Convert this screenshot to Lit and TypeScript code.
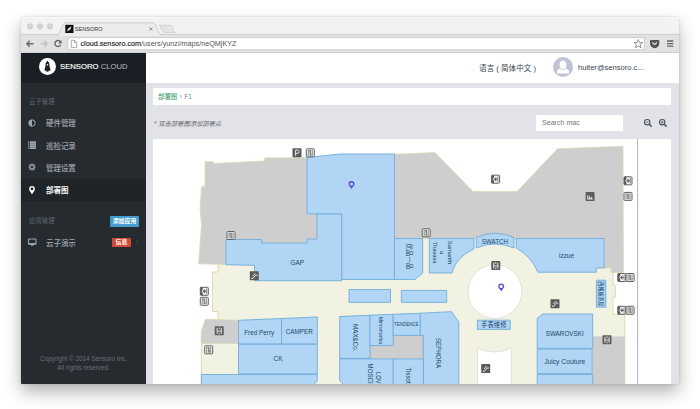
import { LitElement, html, svg, css } from "lit";
import { customElement } from "lit/decorators.js";

type Kind = "parking" | "lift" | "exit" | "stairs" | "toilet" | "atm";

const SHOPS: string[] = [
  "307,157.5 340,154 394.5,154 394.5,279.5 341.7,279.5 341.7,214 307,214",
  "317,214 341.7,214 341.7,280.7 254.5,280.7 254.5,265.3 226,264.7 226,239.5 261.5,239.5 261.5,243 307,243 307,239 317,239",
  "394.5,238.5 422.7,238.5 422.7,273 415,279.5 394.5,279.5",
  "349,289.5 390.5,289.5 390.5,302.4 349,302.4",
  "401.4,290.4 446.6,290.4 446.6,302.4 401.4,302.4",
  "238.5,320.3 281.5,318.5 281.5,344 238.5,344",
  "281.5,318.5 317.3,317 317.3,344 281.5,344",
  "238.5,344.3 317.3,344.3 317.3,373.8 238.5,373.8",
  "201.3,374.5 317.3,374.5 317.3,381 313,385 201.3,385",
  "339.7,316.6 370,315.2 370,358.4 339.7,358.4",
  "370,315.2 393.2,314.3 393.2,345.5 370,345.5",
  "393.2,314.3 420.3,313.2 420.3,335.4 393.2,335.4",
  "420.3,313.2 451.5,311.7 458.8,322 458.8,386 423.4,386 423.4,335.4 420.3,335.4",
  "339.7,358.9 393.2,358.9 393.2,386 345,386 339.7,380.5",
  "393.2,358.9 423.4,358.9 423.4,386 393.2,386",
  "477.4,320.2 510.2,320.2 510.2,329.4 477.4,329.4",
  "537.2,318.5 542.5,314 592.7,314 592.7,348.3 537.2,348.3",
  "537.2,349 592.2,349 592.2,373.7 537.2,373.7",
  "537.2,374.5 592.7,374.5 592.7,386 537.2,386",
  "596.4,280.2 605.8,280.2 605.8,307.2 596.4,307.2",
];

const CURVED: string[] = [
  "M429.3 238.5H474V249Q456 257 451.8 273H429.3Z",
  "M476.3 237.5Q495 229 514 237.5V248Q495 240 476.3 248Z",
  "M516.2 238.5H604V268H596.3V272.2H537.8Q532 257 516.2 248Z",
];

const LABELS: { t: string; x: number; y: number; s: number; w?: number; r?: boolean }[] = [
  { t: "GAP", x: 297.3, y: 264.6, s: 6.8, w: 13.6 },
  { t: "Fred Perry", x: 259.2, y: 334.9, s: 6.6, w: 30 },
  { t: "CAMPER", x: 299.3, y: 333.6, s: 6.6, w: 27 },
  { t: "CK", x: 278, y: 361.4, s: 6.6, w: 9 },
  { t: "SWATCH", x: 494.9, y: 243.5, s: 6.8, w: 26.5 },
  { t: "izzue", x: 566.5, y: 257.8, s: 6.8, w: 15 },
  { t: "SWAROVSKI", x: 564.7, y: 335.9, s: 6.6, w: 38 },
  { t: "Juicy Couture", x: 564.7, y: 363.8, s: 6.6, w: 41 },
  { t: "TENDENCE", x: 406.3, y: 326, s: 5, w: 24.5 },
  { t: "手表维修", x: 493.8, y: 327, s: 6.4, w: 25.5 },
  { t: "MAX&Co.", x: 354.8, y: 337.8, s: 6.4, w: 27.5, r: true },
  { t: "Minnetonka", x: 381.6, y: 330.5, s: 5.2, w: 27.5, r: true },
  { t: "SEPHORA", x: 438.2, y: 353, s: 6.6, w: 30, r: true },
  { t: "Tissot", x: 408.3, y: 375.5, s: 6.4, w: 16.6, r: true },
  { t: "MOSCI", x: 369.7, y: 373.6, s: 6.4, w: 20, r: true },
  { t: "LOV", x: 378, y: 377.9, s: 6.4, w: 11.6, r: true },
  { t: "优品一品", x: 408.8, y: 256.5, s: 6.6, w: 26, r: true },
  { t: "Samanth", x: 450.3, y: 252.5, s: 5.6, w: 23.5, r: true },
  { t: "a", x: 442, y: 252.5, s: 5.6, r: true },
  { t: "Thavasa", x: 435, y: 252.5, s: 5.6, w: 22, r: true },
  { t: "西城旅游局", x: 601.2, y: 293.7, s: 5.2, w: 25, r: true },
];

const SIGNS: [Kind, number, number][] = [
  ["parking", 297, 152.8], ["lift", 310.3, 152.8], ["lift", 231, 235.5],
  ["stairs", 254.3, 275.8], ["exit", 204.3, 291.3], ["lift", 204.3, 301.3],
  ["toilet", 219.2, 330.8], ["lift", 208.7, 349.8], ["lift", 426.2, 232.8],
  ["exit", 495.6, 179.2], ["atm", 590.1, 196.5], ["exit", 628, 180.8],
  ["lift", 628, 196.4], ["toilet", 495.8, 265.6], ["stairs", 555, 303.7],
  ["exit", 621.8, 277.5], ["lift", 630.1, 277.5], ["exit", 621.8, 310.3],
  ["lift", 630.1, 310.3], ["toilet", 607, 339.7], ["stairs", 485.7, 368.6],
];

const glyph = (k: Kind) => {
  switch (k) {
    case "parking":
      return svg`<rect class="solid" x="-4.5" y="-4.5" width="9" height="9" rx=".8"/><path class="cut" d="M-1.4 3V-2.8H.4A1.6 1.6 0 0 1 .4.6H-1.4"/>`;
    case "lift":
      return svg`<rect class="open" x="-4" y="-4" width="8" height="8" rx=".8"/><path class="thin" d="M-2-3V3M2-3V3M-1.2-2.4H.4L-.4 2.4H1.4M-.6-2.4 .8 2.2"/>`;
    case "exit":
      return svg`<rect class="open" x="-4" y="-4" width="8" height="8" rx=".8"/><path class="solid" d="M-4-4H-1.6V-1.6L-2.8 0-1.6 1.6V4H-4Z"/><path class="solid" d="M-1.8 0 .6-2.2V2.2Z"/><path class="solid" d="M.4-.6H2V.6H.4Z"/><path class="thin" d="M2.3-2.8V2.8"/>`;
    case "stairs":
      return svg`<rect class="solid" x="-4.5" y="-4.5" width="9" height="9" rx=".6"/><path class="cut" d="M-3 2.6H-1.2L1.4-.6H3.2M-1.6.4 1-2.6"/>`;
    case "toilet":
      return svg`<rect class="solid" x="-4.5" y="-4.5" width="9" height="9" rx=".8"/><path class="cut" d="M-2.1-2.9V3M2.1-2.9V3M-2 .3H2M0-3.4V-1.6M0 2V3.6"/>`;
    case "atm":
      return svg`<rect class="solid" x="-4.5" y="-4.5" width="9" height="9" rx=".8"/><path class="cut" d="M-2.3 2.8V-1.4M-.4 2.8V-.6M1.4 2.8V.6M-2.6 2.4H2.8"/>`;
  }
};

const pin = (x: number, y: number) =>
  svg`<path class="pin" transform="translate(${x} ${y})" d="M0 4C-1.1 1.8-3 .7-3-.9A3 3 0 0 1 3-.9C3 .7 1.1 1.8 0 4ZM0-2.5A1.6 1.6 0 1 0 0 .7 1.6 1.6 0 1 0 0-2.5Z"/>`;

@customElement("floor-map")
export class FloorMap extends LitElement {
  static styles = css`
    :host { display: block; background: #fff; overflow: hidden; }
    svg { display: block; width: 518px; height: 245px; }
    .floor { fill: #f1f2e1; stroke: #dfd5a6; stroke-width: 0.9; }
    .void { fill: #cecece; stroke: #e0d8b4; stroke-width: 0.8; }
    .grey { fill: #cecece; stroke: #c6c8c2; stroke-width: 0.4; }
    .shop { fill: #b1d6f5; stroke: #6fabdc; stroke-width: 0.9; }
    .hole { fill: #fff; stroke: #dcdcd2; stroke-width: 0.8; }
    .edge { stroke: #a9a9a9; stroke-width: 0.9; }
    .label { fill: #23476b; text-anchor: middle; font-family: "Liberation Sans", "Noto Sans CJK SC", sans-serif; }
    .solid { fill: #5b5b5b; }
    .open { fill: #f4f4f4; stroke: #626262; stroke-width: 1; }
    .thin { fill: none; stroke: #6a6a6a; stroke-width: 0.8; }
    .cut { fill: none; stroke: #e8e8e8; stroke-width: 1; }
    .pin { fill: #5f49d0; fill-rule: evenodd; }
  `;

  render() {
    return html`<svg viewBox="153 139 518 245">
      <path class="edge" d="M637.6 139V384" />
      <path class="floor" d="M218 262V272H212.5V311.5H218V319.5L205 332H201.4V390H624.8V314.5H613V297.3H615.3V285H613V272.5L600 238H394V264Z" />
      <path class="void" d="M205 161.8H213.5V163.5L264.7 161V158L307 157.6V214H317V239H307V243H261.5V239.5H226V264.5L198.6 263.8 201.5 225 200 209 201.5 186.7H205Z" />
      <path class="void" d="M394.5 154.2 435 152.6 473 191.5H517L557.5 148.8 623 146.3 623.4 272.5H611V268H604V238.5H394.5Z" />
      <path class="void" d="M205.3 319.2 238.5 320.3V343.5H201.4V331Z" />
      <path class="grey" d="M370 345.5H393V335.4H423.4V358.6H370ZM593 336.7H624.5V386H593Z" />
      <path fill="#f1f2e1" d="M423.2 238.9H428.8V262H423.2Z" />
      ${SHOPS.map((p) => svg`<polygon class="shop" points=${p} />`)}
      ${CURVED.map((d) => svg`<path class="shop" d=${d} />`)}
      <circle class="hole" cx="495" cy="291.5" r="26.9" />
      <path class="hole" d="M477.6 390V348Q494.5 356 511.4 348V390Z" />
      ${LABELS.map((l) => {
        const spin = l.r ? `rotate(90 ${l.x} ${l.y})` : "";
        return l.w
          ? svg`<text class="label" x=${l.x} y=${l.r ? l.y + 2.2 : l.y} font-size=${l.s} textLength=${l.w} lengthAdjust="spacingAndGlyphs" transform=${spin}>${l.t}</text>`
          : svg`<text class="label" x=${l.x} y=${l.y + 2.2} font-size=${l.s} transform=${spin}>${l.t}</text>`;
      })}
      ${SIGNS.map(([k, x, y]) => svg`<g transform="translate(${x} ${y})">${glyph(k)}</g>`)}
      ${pin(351.5, 185)} ${pin(501.2, 287.3)}
    </svg>`;
  }
}

const MENU = [
  { label: "硬件管理", icon: svg`<circle cx="5" cy="5" r="3.2" fill="none" stroke="currentColor" stroke-width="1"/><path fill="currentColor" d="M5 1.8A3.2 3.2 0 0 0 5 8.2Z"/>` },
  { label: "巡检记录", icon: svg`<path fill="currentColor" d="M1.3 1.3H2.3V9H1.3ZM3 1.3H9V9H3Z"/><path stroke="#262a2f" stroke-width=".3" d="M1 3.2H9M1 5.2H9M1 7.2H9"/>` },
  { label: "管理设置", icon: svg`<circle cx="5" cy="5" r="2.1" fill="none" stroke="currentColor" stroke-width="1.3"/><path stroke="currentColor" stroke-width="1.1" d="M5 1.3V2.8M5 7.2V8.7M1.4 5H2.8M7.2 5H8.6M2.4 2.4 3.4 3.4M6.6 6.6 7.6 7.6M2.4 7.6 3.4 6.6M6.6 3.4 7.6 2.4"/>` },
  { label: "部署图", active: true, icon: svg`<path fill="currentColor" fill-rule="evenodd" d="M5 9.4C4 7.2 2.1 5.8 2.1 3.9A2.9 2.9 0 0 1 7.9 3.9C7.9 5.8 6 7.2 5 9.4ZM5 2.4A1.4 1.4 0 1 0 5 5.2 1.4 1.4 0 1 0 5 2.4Z"/>` },
];

@customElement("app-root")
export class AppRoot extends LitElement {
  static styles = css`
    :host { display: block; height: 409px; overflow: hidden; background: #fff; font-family: "Liberation Sans", "Noto Sans CJK SC", sans-serif; }
    * { box-sizing: border-box; }
    svg { display: block; flex: none; }
    .stage { height: 409px; padding: 17px 21px 25px; }
    .window { height: 367px; display: flex; flex-direction: column; border-radius: 3px 3px 1px 1px; overflow: hidden; box-shadow: 0 8px 17px rgba(0, 0, 0, 0.3), 0 0 2px rgba(0, 0, 0, 0.22); }
    .chrome { flex: none; height: 36px; }
    .chrome svg { width: 658px; height: 36px; }
    .tab { font-size: 5.9px; fill: #333; }
    .url { font-size: 7.4px; fill: #555; }
    .host { fill: #222; stroke: #222; stroke-width: 0.15; }
    .body { flex: 1; display: flex; min-height: 0; }
    .side { width: 125px; flex: none; background: #262b2f; display: flex; flex-direction: column; }
    .brand { height: 30px; flex: none; background: #1a1e25; display: flex; align-items: center; padding: 0 0 3px 18px; gap: 4px; color: #e9ebee; white-space: nowrap; }
    .name { display: block; width: 70px; height: 17px; }
    .heading { display: flex; align-items: center; justify-content: space-between; padding: 0 7px 0 8px; color: #5f6673; font-size: 6.4px; flex: none; }
    .first { height: 29px; padding-top: 7px; }
    .second { height: 30px; padding-top: 7px; }
    .item { height: 22.4px; flex: none; display: flex; align-items: center; padding: 0 7px 0 6px; color: #a0a5b2; font-size: 7.5px; font-weight: 500; border-bottom: 1px solid #23272b; letter-spacing: -0.05px; }
    .item .text { margin-left: 9px; }
    .active { background: #1f2428; color: #f4f5f6; font-weight: 700; }
    .badge { border-radius: 1px; color: #fff; font-size: 5.9px; font-weight: 700; line-height: 11px; text-align: center; }
    .add { width: 29px; background: #439dd1; margin-top: 3px; }
    .item .info { width: 19px; line-height: 9px; font-size: 5.9px; background: #d24a36; margin-left: auto; letter-spacing: 0; }
    .copy { margin-top: auto; text-align: center; color: #687080; font-size: 6.35px; line-height: 9px; padding-bottom: 12.5px; }
    .main { flex: 1; min-width: 0; background: #e2e3e9; display: flex; flex-direction: column; }
    .top { height: 30px; flex: none; background: #fff; display: flex; align-items: center; justify-content: flex-end; padding: 0 35px 2px 0; color: #3d4654; }
    .lang { font-size: 7.6px; margin-right: 17px; white-space: pre; }
    .mail { font-size: 7.55px; margin-left: 5px; width: 66px; white-space: nowrap; }
    .crumb { margin: 5px 8px 0 7px; height: 17px; flex: none; background: #fff; display: flex; align-items: center; padding: 0 0 1px 5px; font-size: 6.4px; color: #7d8494; gap: 2.5px; }
    .green { color: #4da67c; font-weight: 500; }
    .tools { height: 34px; flex: none; display: flex; align-items: center; padding: 2px 11px 0 8px; font-size: 6.3px; color: #666; }
    .tip { font-style: italic; }
    .search { margin-left: auto; width: 87px; height: 16px; background: #fff; padding-left: 6px; line-height: 17px; font-size: 7.1px; color: #777; }
    .zoom { display: flex; gap: 5px; margin-left: 20px; }
    floor-map { flex: 1; margin: 0 8px 0 7px; min-height: 0; }
  `;

  private chrome() {
    return html`<svg viewBox="21 17 658 36">
      <path fill="#f2f2f2" d="M21 17H679V35H21Z" />
      <path fill="#fafafa" d="M21 17H679V18H21Z" />
      <path fill="#e2e2e2" d="M21 34.5H679V53H21Z" />
      <path stroke="#c6c6c6" stroke-width=".8" d="M21 34.4H679M21 52.6H679" />
      <g fill="#d2d2d2" stroke="#c6c6c6" stroke-width=".4"><circle cx="30" cy="26.4" r="2.8" /><circle cx="40" cy="26.4" r="2.8" /><circle cx="50" cy="26.4" r="2.8" /></g>
      <path fill="#ececec" stroke="#c6c6c6" stroke-width=".8" d="M57.5 35C61 34 61.5 23 65.5 22.8H152.5C157 23 157.5 34 161 35" />
      <path fill="#ececec" d="M59 34H160V36H59Z" />
      <path fill="#e4e4e4" stroke="#c9c9c9" stroke-width=".7" d="M159.5 25.3H171C173 25.5 173 31 175 32.5H164.5C161.5 32 161 27 159.5 25.3Z" />
      <rect x="65.3" y="24.8" width="8.2" height="8.2" fill="#111" />
      <path fill="#ddd" d="M67 31.5 68 28.5 71.5 26.2 70.5 29.5Z" />
      <text class="tab" x="74.8" y="31.2" textLength="27.7" lengthAdjust="spacingAndGlyphs">SENSORO</text>
      <path stroke="#777" stroke-width=".8" d="M149.3 27.3 152.3 30.5M152.3 27.3 149.3 30.5" />
      <g fill="none" stroke-width="1.4">
        <path stroke="#666" d="M33.5 43.7H27M29.8 40.7 26.8 43.7 29.8 46.7" />
        <path stroke="#c2c2c2" d="M40.5 43.7H47M44.2 40.7 47.2 43.7 44.2 46.7" />
        <path stroke="#666" d="M60.4 41.8A3 3 0 1 0 60.7 44.8" />
      </g>
      <path fill="#666" d="M61.6 40V43.4H58.2Z" />
      <path fill="#fff" stroke="#bdbdbd" stroke-width=".7" d="M67.8 37.6H644.3V49.8H67.8Z" />
      <path fill="#fff" stroke="#8c8c8c" stroke-width=".7" d="M71.3 40.3H74.6L76.7 42.4V47.6H71.3ZM74.5 40.3V42.5H76.7" />
      <text class="url" x="80.5" y="46.4" textLength="156" lengthAdjust="spacingAndGlyphs"><tspan class="host">cloud.sensoro.com</tspan>/users/yunzi/maps/neQMjKYZ</text>
      <path fill="#fff" stroke="#777" stroke-width=".8" d="M638.3 39.6 639.5 42.6 642.6 42.7 640.2 44.7 641 47.8 638.3 46.1 635.6 47.8 636.4 44.7 634 42.7 637.1 42.6Z" />
      <path fill="#555" d="M650.8 40H658.5Q659.3 40 659.3 40.8V43.5A4.6 4.6 0 0 1 650 43.5V40.8Q650 40 650.8 40Z" />
      <path fill="none" stroke="#eee" stroke-width="1.1" d="M652.4 42.5 654.65 44.6 656.9 42.5" />
      <path stroke="#666" stroke-width="1.3" d="M667 41H673.3M667 43.6H673.3M667 46.2H673.3" />
    </svg>`;
  }

  private lens(plus: boolean) {
    return html`<svg width="10" height="10" viewBox="0 0 10 10" fill="none" stroke="#4a525e">
      <circle cx="4.2" cy="4.2" r="2.7" stroke-width="1.1" />
      <path stroke-width="1.5" d="M6.2 6.2 8.6 8.6" />
      <path stroke-width=".8" d=${plus ? "M2.9 4.2H5.5M4.2 2.9V5.5" : "M2.9 4.2H5.5"} />
    </svg>`;
  }

  render() {
    return html`<div class="stage"><div class="window">
      <div class="chrome">${this.chrome()}</div>
      <div class="body">
        <nav class="side">
          <div class="brand">
            <svg width="17" height="17" viewBox="0 0 17 17"><circle cx="8.5" cy="8.5" r="8.5" fill="#fff" /><path fill="#1a1e25" d="M8.5 2.8C10.2 4.3 10.7 6 10.6 9L11.3 10.6V13.2L10 12.4H9.5V13.8H7.5V12.4H7L5.7 13.2V10.6L6.4 9C6.3 6 6.8 4.3 8.5 2.8Z" /><circle cx="8.5" cy="6.8" r=".8" fill="#fff" /></svg>
            <svg class="name" viewBox="0 0 70 17"><text x="0" y="11.3" font-size="7.3" fill="#fff" stroke="#fff" stroke-width=".15" textLength="38.5" lengthAdjust="spacingAndGlyphs">SENSORO</text><text x="40.7" y="11.3" font-size="7.3" fill="#b9bdc4" textLength="27" lengthAdjust="spacingAndGlyphs">CLOUD</text></svg>
          </div>
          <div class="heading first">云子管理</div>
          ${MENU.map((m) => html`<div class="item ${m.active ? "active" : ""}"><svg width="10" height="10" viewBox="0 0 10 10">${m.icon}</svg><span class="text">${m.label}</span></div>`)}
          <div class="heading second"><span>应用管理</span><span class="badge add">添加应用</span></div>
          <div class="item"><svg width="10" height="10" viewBox="0 0 10 10"><path fill="none" stroke="currentColor" stroke-width="1" d="M1.5 2H9V7H1.5Z" /><path fill="currentColor" d="M1.2 6H9.3V7.4H6.5V8.8H4V7.4H1.2Z" /></svg><span class="text">云子演示</span><span class="badge info">信息</span><svg width="8" height="6" viewBox="0 0 8 6"><path fill="none" stroke="#4d535c" stroke-width=".8" d="M5.5 1 7.3 3 5.5 5" /></svg></div>
          <div class="copy">Copyright © 2014 Sensoro Inc.<br />All rights reserved.</div>
        </nav>
        <main class="main">
          <div class="top">
            <span class="lang">语言 ( 简体中文 )</span>
            <svg width="20" height="20" viewBox="0 0 20 20"><circle cx="10" cy="10" r="10" fill="#bfc3d5" /><path fill="#fff" d="M4 16.5V14.5Q4.2 12.3 7.5 11.5H12.5Q15.8 12.3 16 14.5V16.5Z" /><ellipse cx="10" cy="7.9" rx="3.9" ry="4.7" fill="#fff" stroke="#bfc3d5" stroke-width=".8" /></svg>
            <span class="mail">huiter@sensoro.c...</span>
          </div>
          <div class="crumb"><span class="green">部署图</span><span>›</span><span>F1</span></div>
          <div class="tools">
            <span class="tip">* 双击部署图添加部署点</span>
            <div class="search">Search mac</div>
            <div class="zoom">${this.lens(false)}${this.lens(true)}</div>
          </div>
          <floor-map></floor-map>
        </main>
      </div>
    </div></div>`;
  }
}
